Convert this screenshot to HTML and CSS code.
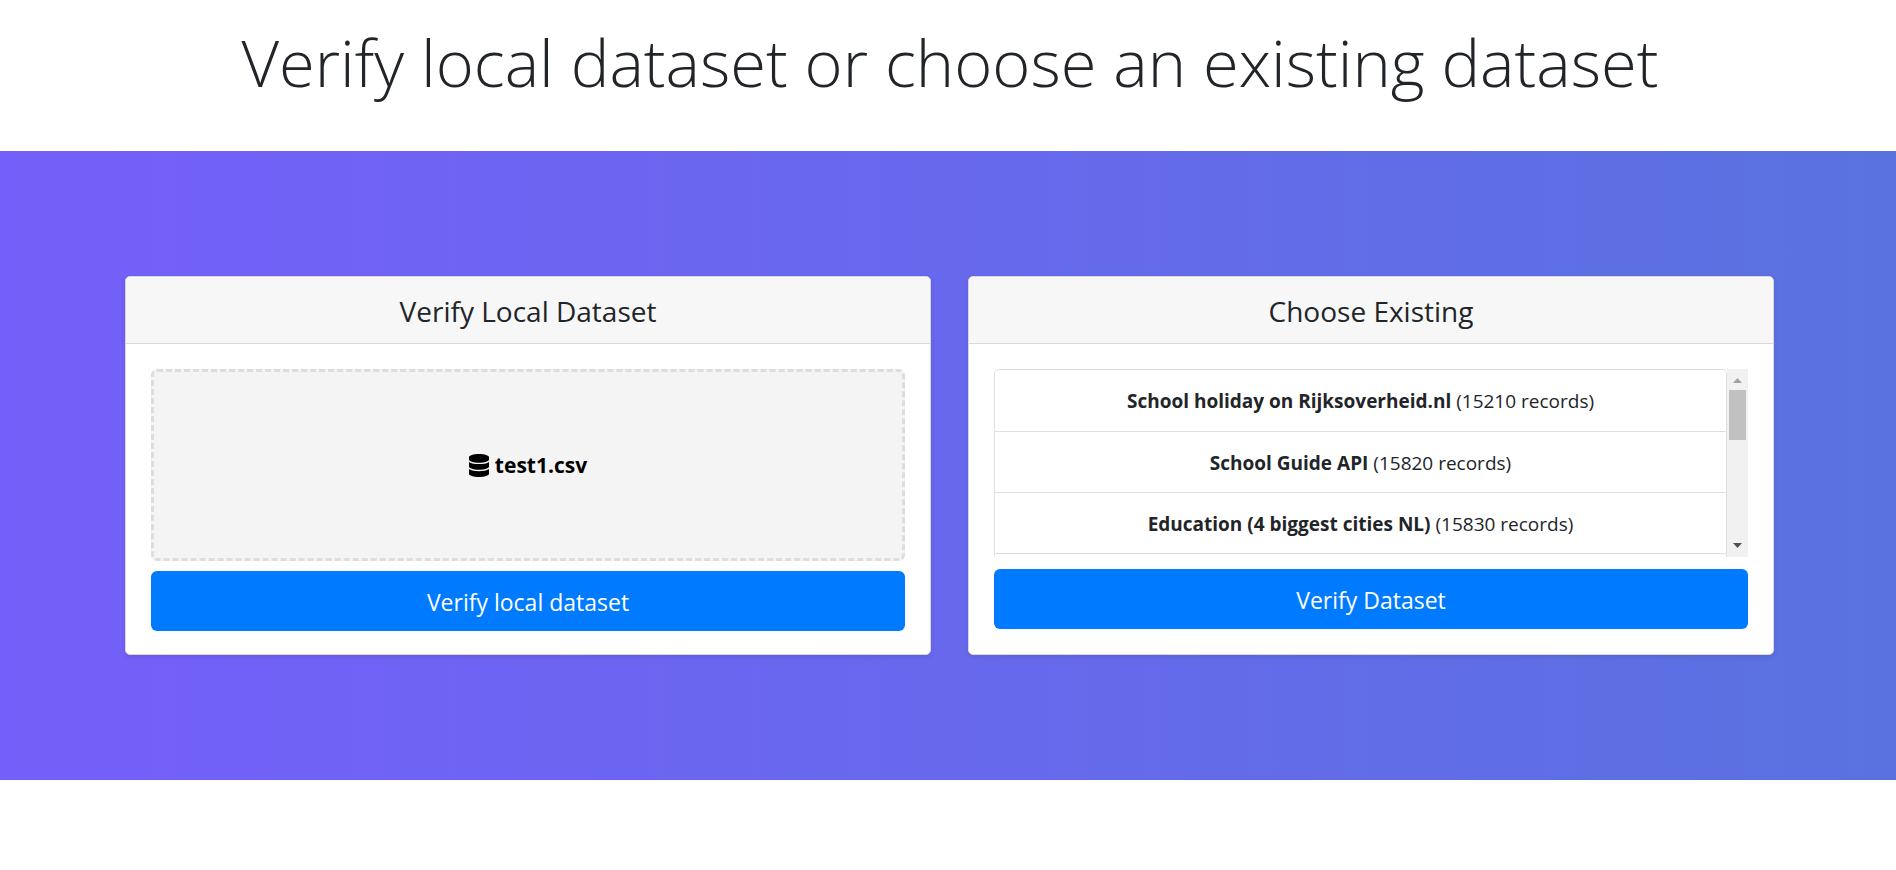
FILE: index.html
```html
<!DOCTYPE html>
<html lang="en">
<head>
<meta charset="utf-8">
<meta name="viewport" content="width=device-width, initial-scale=1">
<title>Verify dataset</title>
<link rel="stylesheet" href="styles.css">
</head>
<body>
<header class="page-header">
  <h1 class="page-title">Verify local dataset or choose an existing dataset</h1>
</header>
<main class="band">
  <section class="card">
    <h2 class="card-header">Verify Local Dataset</h2>
    <div class="card-body">
      <button type="button" class="dropzone">
        <svg class="db-icon" viewBox="0 0 448 512" aria-hidden="true"><path d="M448 73.143v45.714C448 159.143 347.667 192 224 192S0 159.143 0 118.857V73.143C0 32.857 100.333 0 224 0s224 32.857 224 73.143zM448 176v102.857C448 319.143 347.667 352 224 352S0 319.143 0 278.857V176c48.125 33.143 136.208 48.572 224 48.572S399.874 209.143 448 176zm0 160v102.857C448 479.143 347.667 512 224 512S0 479.143 0 438.857V336c48.125 33.143 136.208 48.572 224 48.572S399.874 369.143 448 336z"/></svg>
        <span>test1.csv</span>
      </button>
      <button type="button" class="btn">Verify local dataset</button>
    </div>
  </section>
  <section class="card">
    <h2 class="card-header">Choose Existing</h2>
    <div class="card-body">
      <div class="list-frame">
        <ul class="dataset-list" tabindex="0">
          <li class="dataset"><strong>School holiday on Rijksoverheid.nl</strong> (15210 records)</li>
          <li class="dataset"><strong>School Guide API</strong> (15820 records)</li>
          <li class="dataset"><strong>Education (4 biggest cities NL)</strong> (15830 records)</li>
          <li class="dataset"></li>
        </ul>
        <div class="scrollbar" aria-hidden="true">
          <svg class="arrow arrow-up" viewBox="0 0 21 21"><path d="M6 14L10.500 9L15 14z"/></svg>
          <div class="thumb"></div>
          <svg class="arrow arrow-down" viewBox="0 0 21 21"><path d="M6 7L10.500 12L15 7z"/></svg>
        </div>
      </div>
      <button type="button" class="btn">Verify Dataset</button>
    </div>
  </section>
</main>
</body>
</html>
```
FILE: styles.css
```css
* {
  box-sizing: border-box;
}

body {
  margin: 0;
  background: #fff;
  color: #212529;
  font-family: "Open Sans", "Noto Sans", sans-serif;
  font-size: 19px;
  line-height: 30px;
}

.page-header {
  padding: 20px 24px 47px 28px;
  text-align: center;
}

.page-title {
  margin: 0;
  font-size: 65px;
  font-weight: 300;
  line-height: 84px;
}

.band {
  display: grid;
  grid-template-columns: repeat(auto-fit, minmax(min(480px, 100%), 1fr));
  gap: 37px;
  padding: 125px 122px 125px 125px;
  background: linear-gradient(to right, #755ffa, #5a72e0);
}

.card {
  display: flex;
  flex-direction: column;
  min-width: 0;
  background: #fff;
  border: 1px solid #d8d8d8;
  border-radius: 5px;
  box-shadow: 0 2px 5px rgba(0, 0, 0, 0.08);
  overflow: hidden;
  text-align: center;
}

.card-header {
  margin: 0;
  padding: 16px 25px 14px;
  background: #f7f7f7;
  border-bottom: 1px solid #d8d8d8;
  font-size: 28px;
  font-weight: 400;
  line-height: 36px;
}

.card-body {
  display: flex;
  flex-direction: column;
  padding: 25px 25px 23px;
}

.dropzone {
  display: flex;
  align-items: center;
  justify-content: center;
  gap: 6px;
  height: 192px;
  margin-bottom: 10px;
  padding: 0;
  background: #f4f4f4;
  border: 3px dashed #ddd;
  border-radius: 6px;
  color: #000;
  font: inherit;
  font-size: 21px;
  font-weight: 700;
}

.db-icon {
  width: 20px;
  height: 23px;
}

.list-frame {
  display: flex;
  height: 188px;
  margin-bottom: 12px;
}

.dataset-list {
  flex: 1;
  min-width: 0;
  margin: 0;
  padding: 0;
  list-style: none;
  overflow: hidden auto;
  scrollbar-width: none;
}

.dataset {
  height: 61px;
  padding: 16px 24px 14px;
  border: 1px solid #dfdfdf;
  border-top: 0;
}

.dataset:first-child {
  height: 63px;
  border-top: 1px solid #dfdfdf;
  border-radius: 5px 5px 0 0;
}

.scrollbar {
  display: flex;
  flex-direction: column;
  width: 21px;
  background: #f1f1f1;
}

.arrow {
  width: 21px;
  height: 21px;
}

.arrow-up {
  fill: #a3a3a3;
}

.arrow-down {
  margin-top: auto;
  fill: #505050;
}

.thumb {
  height: 50px;
  margin: 0 2px;
  background: #c1c1c1;
}

.btn {
  padding: 16px 20px 14px;
  background: #007bff;
  border: 0;
  border-radius: 6px;
  color: #fff;
  font: inherit;
  font-size: 23px;
  line-height: 30px;
}
```
